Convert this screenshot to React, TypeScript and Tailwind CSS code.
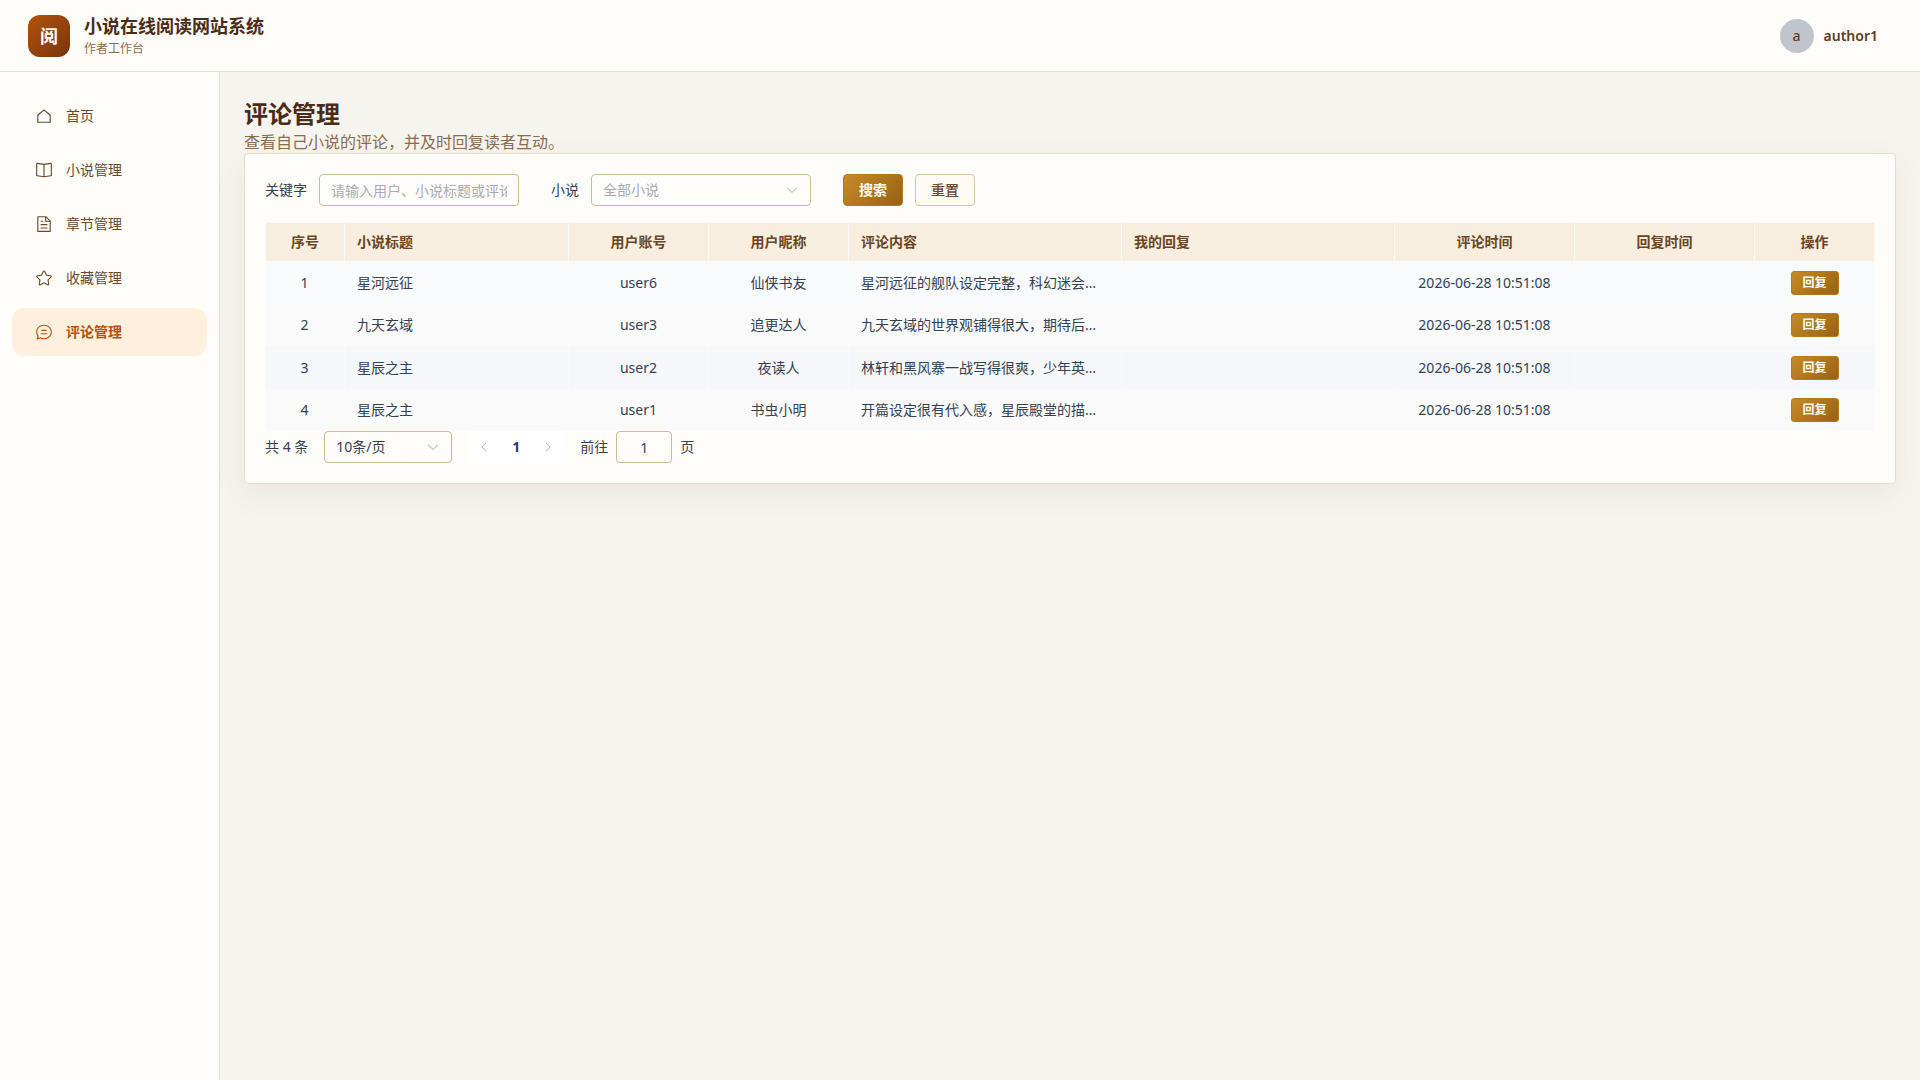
import { useState } from 'react';
import type { ReactNode } from 'react';

type Comment = { title: string; account: string; nickname: string; content: string; time: string };

const comments: Comment[] = [
  { title: '星河远征', account: 'user6', nickname: '仙侠书友', content: '星河远征的舰队设定完整，科幻迷会喜欢这种风格。', time: '2026-06-28 10:51:08' },
  { title: '九天玄域', account: 'user3', nickname: '追更达人', content: '九天玄域的世界观铺得很大，期待后面的剧情展开。', time: '2026-06-28 10:51:08' },
  { title: '星辰之主', account: 'user2', nickname: '夜读人', content: '林轩和黑风寨一战写得很爽，少年英雄的感觉出来了。', time: '2026-06-28 10:51:08' },
  { title: '星辰之主', account: 'user1', nickname: '书虫小明', content: '开篇设定很有代入感，星辰殿堂的描写也很细致。', time: '2026-06-28 10:51:08' },
];

function Icon({ size, children }: { size: string; children: ReactNode }) {
  return <svg viewBox="0 0 1024 1024" fill="currentColor" className={size} aria-hidden="true">{children}</svg>;
}

const menu = [
  { label: '首页', icon: <path d="M512 128 128 447.936V896h768V447.936zm0 83.3L832 477.9V832H192V477.9z" /> },
  { label: '小说管理', icon: <path d="m512 863.36 384-54.848v-638.72L525.568 222.72a96 96 0 0 1-27.136 0L128 169.792v638.72zM137.024 106.432l370.432 52.928a32 32 0 0 0 9.088 0l370.432-52.928A64 64 0 0 1 960 169.792v638.72a64 64 0 0 1-54.976 63.36l-388.48 55.488a32 32 0 0 1-9.088 0l-388.48-55.488A64 64 0 0 1 64 808.512v-638.72a64 64 0 0 1 73.024-63.36M480 192h64v704h-64z" /> },
  { label: '章节管理', icon: <path d="M832 384H576V128H192v768h640zm-26.496-64L640 154.496V320zM160 64h480l256 256v608a32 32 0 0 1-32 32H160a32 32 0 0 1-32-32V96a32 32 0 0 1 32-32m160 448h384v64H320zm0-192h160v64H320zm0 384h384v64H320z" /> },
  { label: '收藏管理', icon: <path d="m512 747.84 228.16 119.936a6.4 6.4 0 0 0 9.28-6.72l-43.52-254.08 184.512-179.904a6.4 6.4 0 0 0-3.52-10.88l-255.104-37.12L517.76 147.904a6.4 6.4 0 0 0-11.52 0L392.192 379.072l-255.104 37.12a6.4 6.4 0 0 0-3.52 10.88L318.08 606.976l-43.584 254.08a6.4 6.4 0 0 0 9.28 6.72zM313.6 924.48a70.4 70.4 0 0 1-102.144-74.24l37.888-220.928L88.96 472.96A70.4 70.4 0 0 1 128 352.896l221.76-32.256 99.2-200.96a70.4 70.4 0 0 1 126.208 0l99.2 200.96 221.824 32.256a70.4 70.4 0 0 1 39.04 120.064L774.72 629.376l37.888 220.928a70.4 70.4 0 0 1-102.144 74.24L512 820.096l-198.4 104.32z" /> },
  { label: '评论管理', icon: <path d="m174.72 855.68 135.296-45.12 23.68 11.84C388.096 849.536 448.576 864 512 864c211.84 0 384-166.784 384-352S723.84 160 512 160 128 326.784 128 512c0 69.12 24.96 139.264 70.848 199.232l22.08 28.8-46.272 115.584zm-45.248 82.56A32 32 0 0 1 89.6 896l58.368-145.92C94.72 680.32 64 596.864 64 512 64 299.904 256 96 512 96s448 203.904 448 416-192 416-448 416a461.06 461.06 0 0 1-206.912-48.384l-175.616 58.56zM352 576h320q32 0 32 32t-32 32H352q-32 0-32-32t32-32m32-192h256q32 0 32 32t-32 32H384q-32 0-32-32t32-32" /> },
];

const columns = [
  { label: '序号', width: 'w-[80px]', align: 'text-center' },
  { label: '小说标题', width: 'w-[224px]', align: 'text-left' },
  { label: '用户账号', width: 'w-[140px]', align: 'text-center' },
  { label: '用户昵称', width: 'w-[140px]', align: 'text-center' },
  { label: '评论内容', width: 'w-[273px]', align: 'text-left' },
  { label: '我的回复', width: 'w-[273px]', align: 'text-left' },
  { label: '评论时间', width: 'w-[180px]', align: 'text-center' },
  { label: '回复时间', width: 'w-[180px]', align: 'text-center' },
  { label: '操作', width: 'w-[120px]', align: 'text-center' },
];

function Chevron({ className }: { className: string }) {
  return (
    <Icon size={className}>
      <path d="M831.872 340.864 512 652.672 192.128 340.864a30.59 30.59 0 0 0-42.752 0 29.12 29.12 0 0 0 0 41.6L489.664 714.24a32 32 0 0 0 44.672 0l340.288-331.712a29.12 29.12 0 0 0 0-41.728 30.59 30.59 0 0 0-42.752 0z" />
    </Icon>
  );
}

export default function App() {
  const [active, setActive] = useState('评论管理');
  const [keyword, setKeyword] = useState('');
  const [novel, setNovel] = useState('');
  const [pageSize, setPageSize] = useState('10');
  const [jump, setJump] = useState('1');

  const titles = [...new Set(comments.map(c => c.title))];
  const rows = comments.filter(c => (!novel || c.title === novel) && (c.account + c.nickname + c.title + c.content).includes(keyword));

  const reset = () => {
    setKeyword('');
    setNovel('');
  };

  return (
    <div className="flex min-h-screen flex-col bg-[#f6f4ef] font-['Noto_Sans','Noto_Sans_CJK_SC',sans-serif] text-sm text-[#334155]">
      <header className="flex h-[72px] items-center justify-between border-b border-[#eadfce] bg-[#fffdfa] pl-7 pr-[42px]">
        <div className="flex items-center gap-3.5">
          <div className="flex size-[42px] items-center justify-center rounded-xl bg-linear-135 from-[#b45309] to-[#78350f] text-lg font-bold text-white">阅</div>
          <div>
            <div className="text-lg leading-[26px] font-bold text-[#4a2c17]">小说在线阅读网站系统</div>
            <div className="text-xs leading-5 text-[#8b6b4e]">作者工作台</div>
          </div>
        </div>
        <button className="flex items-center gap-2.5 font-semibold text-[#5c3d24]">
          <span className="flex size-[34px] items-center justify-center rounded-full bg-[#c0c4cc] font-medium">a</span>
          author1
        </button>
      </header>

      <div className="flex flex-1">
        <aside className="w-[220px] shrink-0 border-r border-[#eadfce] bg-[#fffdfa] px-3 py-5">
          <nav className="flex flex-col gap-1.5">
            {menu.map(item => (
              <a key={item.label} href="#" onClick={() => setActive(item.label)} className={`flex h-12 items-center gap-2.5 rounded-xl pl-5 ${active === item.label ? 'bg-[#fff0dd] font-bold text-[#b45309]' : 'text-[#6b4a2f]'}`}>
                <span className="flex w-6 justify-center"><Icon size="size-[18px]">{item.icon}</Icon></span>
                {item.label}
              </a>
            ))}
          </nav>
        </aside>

        <main className="min-w-0 flex-1 p-6">
          <h1 className="text-2xl leading-9 font-bold text-[#4a2c17]">评论管理</h1>
          <p className="text-base leading-[21px] text-[#8b6b4e]">查看自己小说的评论，并及时回复读者互动。</p>

          <section className="rounded-sm border border-[#e8dfc8] bg-[#fffdfa] p-5 shadow-[0_12px_32px_rgba(120,80,40,0.08)]">
            <form className="flex items-center gap-8" onSubmit={e => e.preventDefault()}>
              <div className="flex items-center gap-3">
                <label htmlFor="keyword">关键字</label>
                <input id="keyword" value={keyword} onChange={e => setKeyword(e.target.value)} placeholder="请输入用户、小说标题或评论" className="h-8 w-[200px] rounded-sm border border-[#d6b98f] px-[11px] placeholder:text-[#a8abb2]" />
              </div>
              <div className="flex items-center gap-3">
                <label htmlFor="novel">小说</label>
                <div className="relative">
                  <select id="novel" value={novel} onChange={e => setNovel(e.target.value)} className="h-8 w-[220px] appearance-none rounded-sm border border-[#d6b98f] px-[11px] text-[#a8abb2]">
                    <option value="">全部小说</option>
                    {titles.map(t => <option key={t}>{t}</option>)}
                  </select>
                  <Chevron className="pointer-events-none absolute top-[9px] right-3 size-3.5 text-[#a8abb2]" />
                </div>
              </div>
              <div className="flex gap-3">
                <button type="submit" className="h-8 w-[60px] rounded-sm border border-[#b7791f] bg-linear-135 from-[#c88a25] to-[#966313] font-bold text-[#fffdfa]">搜索</button>
                <button type="button" onClick={reset} className="h-8 w-[60px] rounded-sm border border-[#dfc4a0] bg-[#fffaf3] font-medium text-[#6b4a2f]">重置</button>
              </div>
            </form>

            <table className="mt-4 w-full table-fixed border-separate border-spacing-0">
              <thead>
                <tr className="h-[39px] bg-[#f8eedf] text-[#6b4423]">
                  {columns.map(col => (
                    <th key={col.label} className={`border-t border-r border-[#f8fafc] px-3 font-bold first:border-l ${col.width} ${col.align}`}>{col.label}</th>
                  ))}
                </tr>
              </thead>
              <tbody>
                {rows.map((row, i) => (
                  <tr key={row.account} className="h-[42px] bg-[#fafafa] odd:h-[43px] first:bg-[#f8fafc] nth-3:bg-[#f5f7fb] *:border-r *:border-[#f8fafc] *:px-3">
                    <td className="text-center">{i + 1}</td>
                    <td>{row.title}</td>
                    <td className="text-center">{row.account}</td>
                    <td className="text-center">{row.nickname}</td>
                    <td className="truncate">{row.content}</td>
                    <td></td>
                    <td className="text-center">{row.time}</td>
                    <td></td>
                    <td>
                      <button className="mx-auto block h-6 w-12 rounded-[3px] border border-[#b7791f] bg-linear-135 from-[#c88a25] to-[#966313] text-xs font-bold text-[#fffdfa]">回复</button>
                    </td>
                  </tr>
                ))}
              </tbody>
            </table>

            <div className="flex items-center gap-4">
              <span>共 {rows.length} 条</span>
              <div className="relative">
                <select aria-label="每页条数" value={pageSize} onChange={e => setPageSize(e.target.value)} className="h-8 w-[128px] appearance-none rounded-sm border border-[#d6b98f] px-[11px]">
                  <option value="10">10条/页</option>
                  <option value="20">20条/页</option>
                  <option value="50">50条/页</option>
                </select>
                <Chevron className="pointer-events-none absolute top-[9px] right-3 size-3.5 text-[#a8abb2]" />
              </div>
              <div className="flex bg-white">
                <button disabled aria-label="上一页" className="flex size-8 items-center justify-center text-[#a8abb2]"><Chevron className="size-3 rotate-90" /></button>
                <button className="size-8 font-bold text-[#1e3a8a]">1</button>
                <button disabled aria-label="下一页" className="flex size-8 items-center justify-center text-[#a8abb2]"><Chevron className="size-3 -rotate-90" /></button>
              </div>
              <label className="flex items-center gap-2">
                前往
                <input value={jump} onChange={e => setJump(e.target.value)} className="h-8 w-14 rounded-sm border border-[#d6b98f] text-center" />
                页
              </label>
            </div>
          </section>
        </main>
      </div>
    </div>
  );
}
